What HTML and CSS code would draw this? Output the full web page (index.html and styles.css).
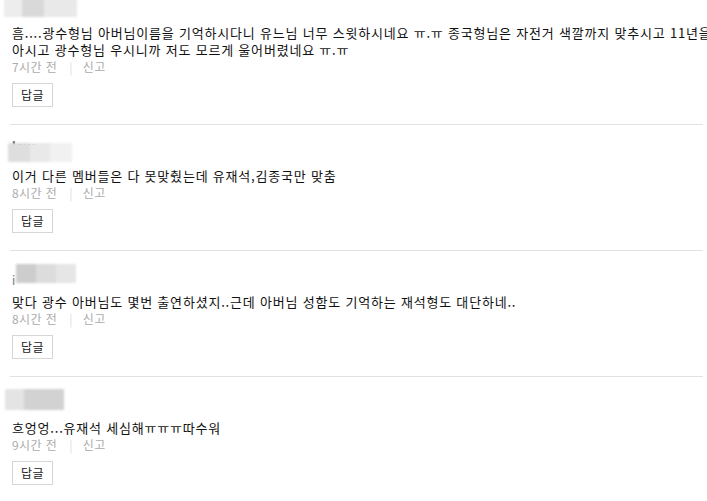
FILE: index.html
```html
<!DOCTYPE html>
<html lang="ko">
<head>
<meta charset="utf-8">
<title>댓글</title>
<link rel="stylesheet" href="styles.css">
</head>
<body>
<ul class="comments">
  <li class="comment">
    <div class="author">
      <span class="author-name">guest</span>
      <span class="mosaic m1"><i class="s1"></i><i class="s2"></i><i class="s3"></i></span>
    </div>
    <p class="body">흠....광수형님 아버님이름을 기억하시다니 유느님 너무 스윗하시네요 ㅠ.ㅠ 종국형님은 자전거 색깔까지 맞추시고 11년을<br>아시고 광수형님 우시니까 저도 모르게 울어버렸네요 ㅠ.ㅠ</p>
    <div class="meta"><span class="time">7시간 전</span><span class="bar">|</span><span class="report">신고</span></div>
    <button class="reply">답글</button>
  </li>
  <li class="comment">
    <div class="author">
      <span class="author-name n2">love</span>
      <span class="mosaic m2"><i class="s1"></i><i class="s2"></i><i class="s3"></i></span>
    </div>
    <p class="body">이거 다른 멤버들은 다 못맞췄는데 유재석,김종국만 맞춤</p>
    <div class="meta"><span class="time">8시간 전</span><span class="bar">|</span><span class="report">신고</span></div>
    <button class="reply">답글</button>
  </li>
  <li class="comment">
    <div class="author">
      <span class="author-name n3">i</span>
      <span class="mosaic m3"><i class="s1"></i><i class="s2"></i><i class="s3"></i></span>
    </div>
    <p class="body">맞다 광수 아버님도 몇번 출연하셨지..근데 아버님 성함도 기억하는 재석형도 대단하네..</p>
    <div class="meta"><span class="time">8시간 전</span><span class="bar">|</span><span class="report">신고</span></div>
    <button class="reply">답글</button>
  </li>
  <li class="comment">
    <div class="author">
      <span class="author-name">h</span>
      <span class="mosaic m4"><i class="s1"></i><i class="s2"></i></span>
    </div>
    <p class="body">흐엉엉...유재석 세심해ㅠㅠㅠ따수워</p>
    <div class="meta"><span class="time">9시간 전</span><span class="bar">|</span><span class="report">신고</span></div>
    <button class="reply">답글</button>
  </li>
</ul>
</body>
</html>
```

FILE: styles.css
```css
html, body {
  margin: 0;
  padding: 0;
  background: #ffffff;
  overflow: hidden;
}

body {
  font-family: "Noto Sans CJK KR", "Noto Sans", sans-serif;
  color: #111;
}

.comments {
  list-style: none;
  margin: -18px 0 0 0;
  padding: 0 4px 0 10px;
  width: 693px;
}

.comment {
  padding: 15px 0 17px 2px;
  border-bottom: 1px solid #e2e2e2;
}

.author {
  position: relative;
  height: 20px;
  font-size: 12px;
  line-height: 12px;
}

.author-name {
  color: #333;
  visibility: hidden;
}

.author-name.n2 {
  visibility: visible;
  font-weight: bold;
}

.author-name.n3 {
  visibility: visible;
  position: relative;
  top: 8px;
  color: #777;
}

.mosaic {
  position: absolute;
  display: flex;
  filter: blur(1px);
}

.mosaic i {
  display: block;
  height: 100%;
}

.m1 { left: -8px; top: 0; height: 20px; }
.m1 .s1 { width: 18px; background: #ededed; }
.m1 .s2 { width: 22px; background: #d9d9d9; }
.m1 .s3 { width: 33px; background: #e9e9e9; }

.m2 { left: -4px; top: 3px; height: 19px; }
.m2 .s1 { width: 22px; background: #dedede; }
.m2 .s2 { width: 20px; background: #e9e9e9; }
.m2 .s3 { width: 22px; background: #f1f1f1; }

.m3 { left: 4px; top: -2px; height: 19px; }
.m3 .s1 { width: 20px; background: #cdcdcd; }
.m3 .s2 { width: 20px; background: #dcdcdc; }
.m3 .s3 { width: 20px; background: #e6e6e6; }

.m4 { left: -7px; top: -3px; height: 21px; }
.m4 .s1 { width: 19px; background: #e4e4e4; }
.m4 .s2 { width: 40px; background: #d2d2d2; }

.body {
  margin: 7px 0 0 0;
  font-size: 13px;
  line-height: 17px;
  letter-spacing: 0.8px;
  color: #111;
  white-space: nowrap;
}

.meta {
  font-size: 12px;
  line-height: 17px;
  letter-spacing: 0.4px;
  color: #acacac;
}

.bar {
  color: #e0e0e0;
  margin: 0 10px 0 12px;
}

.reply {
  display: block;
  margin-top: 8px;
  height: 24px;
  padding: 0 8px;
  border: 1px solid #d6d6d6;
  background: #fff;
  font-family: "Noto Sans CJK KR", "Noto Sans", sans-serif;
  font-size: 12px;
  line-height: 22px;
  letter-spacing: 0.4px;
  color: #222;
}
```
